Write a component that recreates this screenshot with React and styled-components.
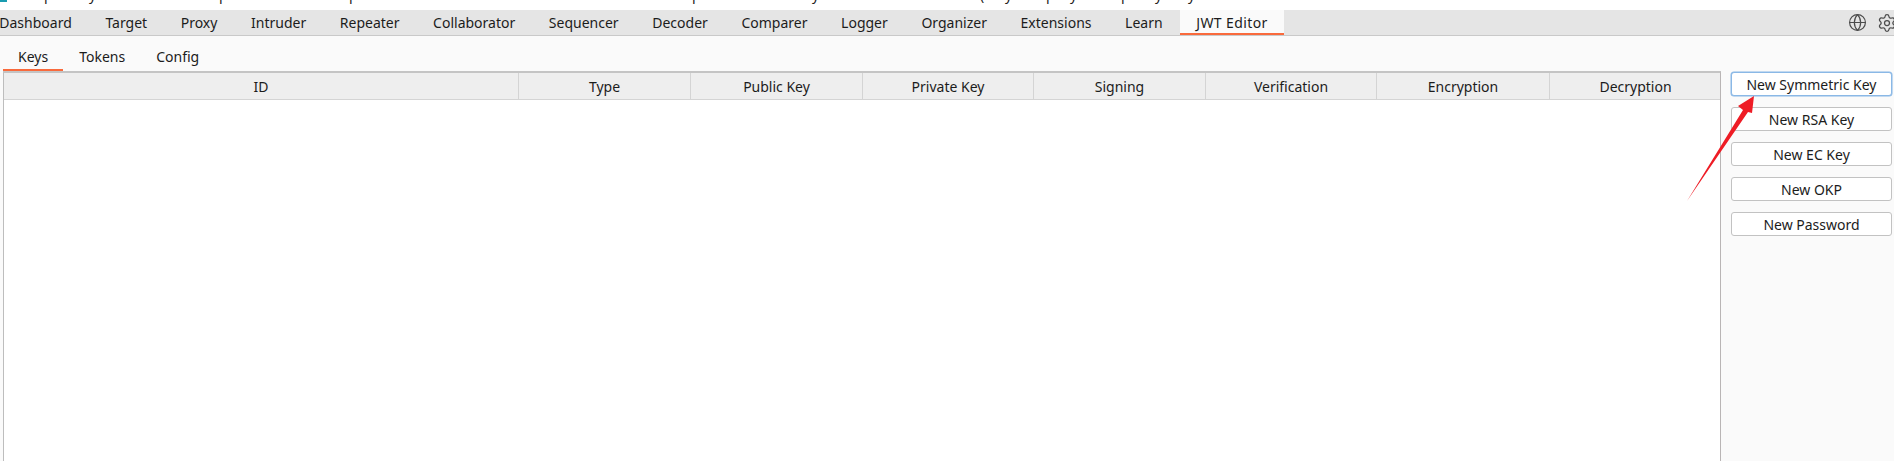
import React from 'react';
import styled, { createGlobalStyle } from 'styled-components';
import { Globe, Settings } from 'lucide-react';

const GlobalStyle = createGlobalStyle`
    html, body {
        margin: 0;
        padding: 0;
        height: 100%;
        overflow: hidden;
        background: #fafafa;
    }
    #root {
        height: 100%;
    }
`

const mainTabs = ['Dashboard', 'Target', 'Proxy', 'Intruder', 'Repeater', 'Collaborator', 'Sequencer', 'Decoder', 'Comparer', 'Logger', 'Organizer', 'Extensions', 'Learn', 'JWT Editor'];
const subTabs = ['Keys', 'Tokens', 'Config'];
const columns = [
    ['ID', 515], ['Type', 172], ['Public Key', 172], ['Private Key', 171],
    ['Signing', 172], ['Verification', 171], ['Encryption', 173], ['Decryption', 171],
];
const buttons = ['New Symmetric Key', 'New RSA Key', 'New EC Key', 'New OKP', 'New Password'];
// bottoms of the title line that gets cut off by the crop: [left edge, letter]
const cutMarks = [[44, 'p'], [89, 'y'], [219, 'p'], [349, 'p'], [692, 'p'], [812, 'y'], [980, '('], [1005, 'y'], [1046, 'p'], [1070, 'y'], [1121, 'p'], [1155, 'y'], [1188, 'y']];

const App = () => {
    return (
      <Page>
        <GlobalStyle />
        <TitleStrip>
            <AppIcon />
            {cutMarks.map(([x, ch], i) => (
                <CutMark key={i} $gap={x - (i === 0 ? 7 : cutMarks[i - 1][0] + 8)}>{ch}</CutMark>
            ))}
        </TitleStrip>
        <TabBar>
            <Tabs>
                {mainTabs.map((t) => <MainTab key={t} $active={t === 'JWT Editor'}>{t}</MainTab>)}
            </Tabs>
            <TabIcons>
                <Globe size={19} strokeWidth={1.5} />
                <GearWrap><Settings size={20} strokeWidth={1.5} /></GearWrap>
            </TabIcons>
        </TabBar>
        <SubTabBar>
            {subTabs.map((t) => <SubTab key={t} $active={t === 'Keys'}>{t}</SubTab>)}
        </SubTabBar>
        <Content>
            <TablePane>
                <HeaderRow>
                    {columns.map(([name, w]) => <HeaderCell key={name} $w={w}>{name}</HeaderCell>)}
                </HeaderRow>
            </TablePane>
            <ButtonPane>
                {buttons.map((b, i) => <KeyButton key={b} $focused={i === 0}>{b}</KeyButton>)}
            </ButtonPane>
        </Content>
        <Arrow width="80" height="116" viewBox="0 0 80 116">
            <path d="M2 111 L58 20 L53 16 L69 6 L67 23 L63 22 Z" fill="#ee1c25" />
        </Arrow>
      </Page>
    )
}

const Page = styled.div`
    position: relative;
    height: 100%;
    display: flex;
    flex-direction: column;
    font-family: 'Noto Sans', sans-serif;
    font-size: 14px;
    color: #1c1c1c;
    overflow: hidden;
`

const TitleStrip = styled.div`
    height: 10px;
    flex: none;
    background: #fff;
    display: flex;
    align-items: flex-start;
    overflow: hidden;
`

const AppIcon = styled.div`
    width: 7px;
    height: 2px;
    background: #1a9cb0;
    flex: none;
`

const CutMark = styled.span`
    width: 8px;
    flex: none;
    margin-left: ${props => props.$gap}px;
    margin-top: -13px;
    line-height: 16px;
    font-size: 14px;
`

const TabBar = styled.div`
    height: 25px;
    flex: none;
    background: #e5e5e5;
    border-bottom: 1px solid #c9c9c9;
    display: flex;
    justify-content: space-between;
`

const Tabs = styled.div`
    display: flex;
    margin-left: -17px;
`

const MainTab = styled.div`
    padding: 0 16.3px;
    margin-right: 1px;
    display: flex;
    align-items: center;
    white-space: nowrap;
    letter-spacing: ${props => props.$active ? '0.4px' : '0'};
    background: ${props => props.$active ? '#fafafa' : 'transparent'};
    box-shadow: ${props => props.$active ? 'inset 0 -2px 0 #f96a3c' : 'none'};
`

const TabIcons = styled.div`
    display: flex;
    align-items: center;
    gap: 10px;
    margin-right: -3px;
    color: #4c4c4c;
`

const GearWrap = styled.span`
    display: flex;
`

const SubTabBar = styled.div`
    height: 35px;
    flex: none;
    display: flex;
    align-items: flex-end;
    padding-left: 3px;
`

const SubTab = styled.div`
    height: 22px;
    padding: 0 15px;
    margin-right: 1px;
    display: flex;
    align-items: center;
    padding-bottom: 2px;
    border-bottom: 2px solid ${props => props.$active ? '#f96a3c' : 'transparent'};
`

const Content = styled.div`
    flex: 1;
    display: flex;
    padding-left: 3px;
`

const TablePane = styled.div`
    width: 1718px;
    flex: none;
    background: #fff;
    border-top: 2px solid #c4c4c4;
    border-left: 1px solid #bdbdbd;
    border-right: 1px solid #b9b5b5;
    box-sizing: border-box;
`

const HeaderRow = styled.div`
    display: flex;
    height: 26px;
    background: #eeeeee;
    border-bottom: 1px solid #d4d4d4;
`

const HeaderCell = styled.div`
    width: ${props => props.$w}px;
    flex: none;
    box-sizing: border-box;
    display: flex;
    align-items: center;
    justify-content: center;
    border-right: 1px solid #d4d4d4;
    &:last-child {
        border-right: none;
    }
`

const ButtonPane = styled.div`
    flex: 1;
    display: flex;
    flex-direction: column;
    gap: 11px;
    padding: 1px 2px 0 10px;
`

const KeyButton = styled.div`
    height: 24px;
    box-sizing: border-box;
    display: flex;
    align-items: center;
    justify-content: center;
    background: #fff;
    border-radius: 3px;
    border: 1px solid ${props => props.$focused ? '#8ab8e6' : '#c2c2c2'};
    box-shadow: ${props => props.$focused ? '0 0 0 0.5px #8ab8e6' : 'none'};
`

const Arrow = styled.svg`
    position: absolute;
    left: 1685px;
    top: 90px;
`

export default App
